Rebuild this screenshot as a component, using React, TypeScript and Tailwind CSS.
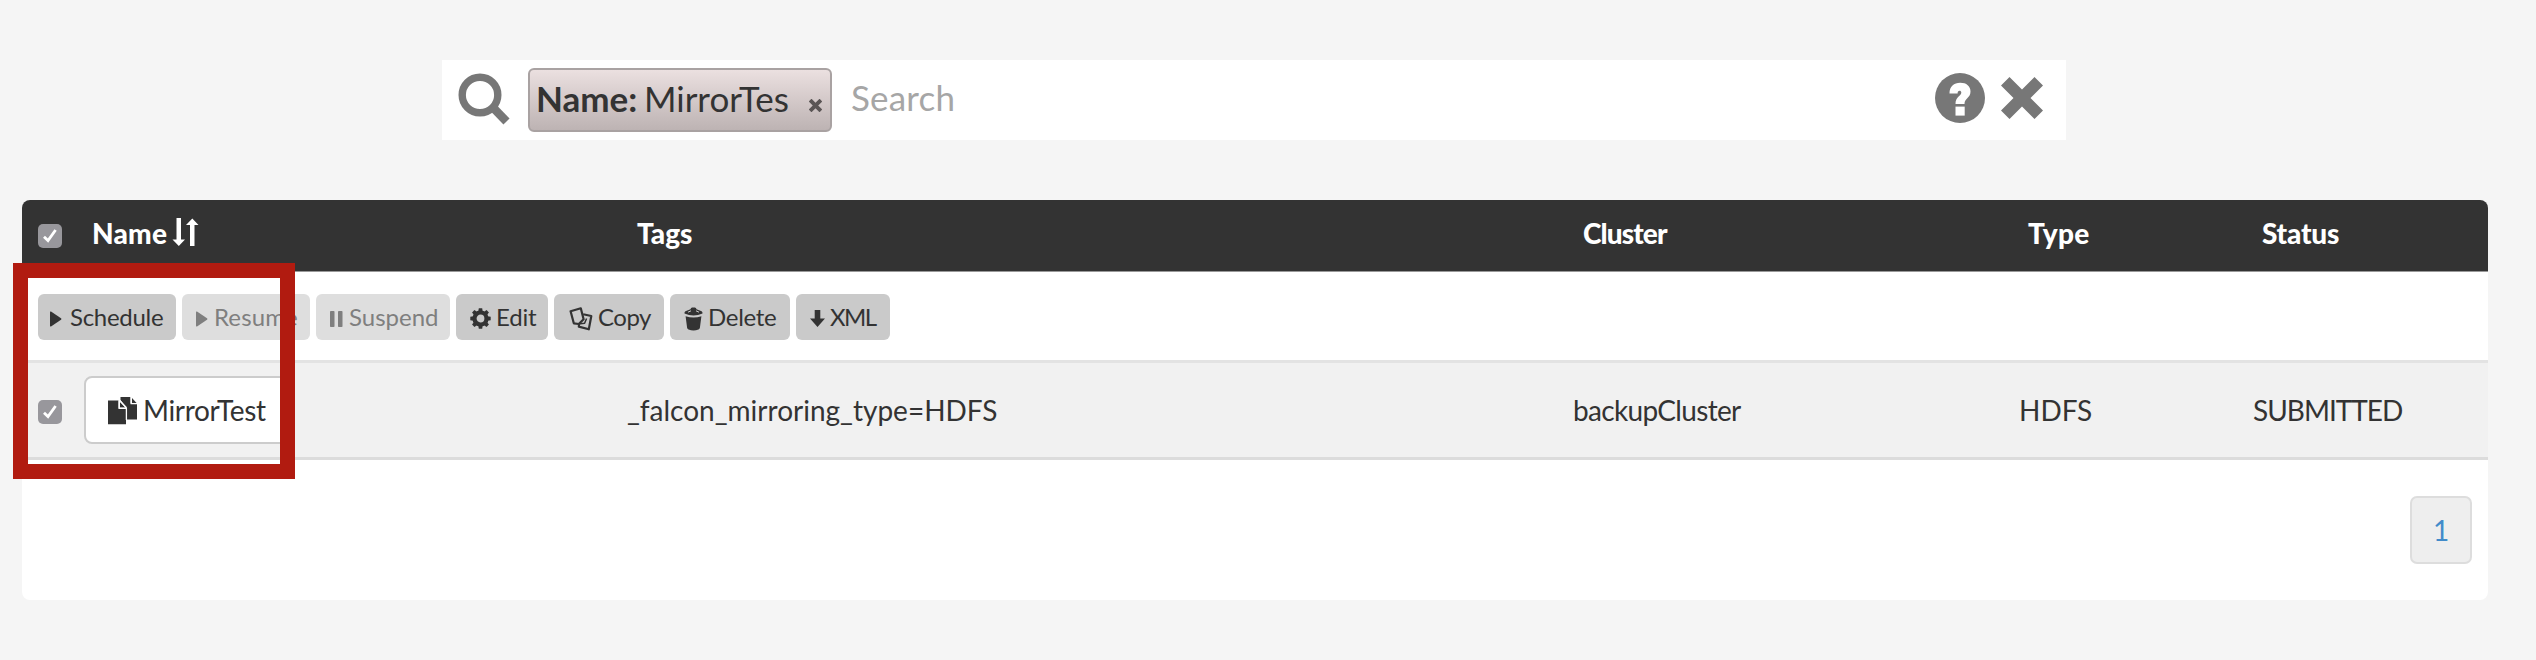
import React from "react";

function SearchIcon() {
  return (
    <svg className="h-[54px] w-[53px] shrink-0" viewBox="0 0 53 54" fill="none" stroke="#777">
      <circle cx="22" cy="22" r="17.8" strokeWidth="7.4" />
      <path d="M34 33.500 48.500 48.500" strokeWidth="8.500" />
    </svg>
  );
}

function HelpIcon() {
  return (
    <svg className="h-[50px] w-[50px] shrink-0" viewBox="0 0 50 50">
      <circle cx="25" cy="25" r="25" fill="#777" />
      <path
        d="M14.500 20.500C14.500 13.500 19 9.800 25.200 9.800C31.500 9.800 35.500 13.200 35.500 18.600C35.500 25.200 29.500 25.400 29.500 31H20.500C20.500 23.500 26.300 23 26.300 19.600C26.300 18.200 25.400 17.800 24.600 17.800C23.200 17.800 22.600 18.800 22.600 20.500Z"
        fill="#fff"
      />
      <rect x="20.500" y="33.600" width="9.200" height="9" fill="#fff" />
    </svg>
  );
}

function CloseIcon() {
  return (
    <svg className="h-[44px] w-[44px] shrink-0" viewBox="0 0 44 44">
      <path
        d="M9.500 1 22 13.500 34.500 1 43 9.500 30.500 22 43 34.500 34.500 43 22 30.500 9.500 43 1 34.500 13.500 22 1 9.500Z"
        fill="#777"
      />
    </svg>
  );
}

function SortIcon() {
  return (
    <svg className="h-[29px] w-[27px]" viewBox="0 0 27 29" fill="#fff">
      <path d="M4.500 0h4.500v21.500h4L6.800 28 .5 21.500h4z" />
      <path d="M18 28h4.500V7h4L20.300 .5 14 7h4z" />
    </svg>
  );
}

function PlayIcon() {
  return (
    <svg className="h-[16px] w-[13px]" viewBox="0 0 13 16" fill="currentColor">
      <path d="M1 1.200Q1 0 2 .6L12 7.200Q13 8 12 8.800L2 15.400Q1 16 1 14.800Z" />
    </svg>
  );
}

function PauseIcon() {
  return (
    <svg className="h-[16px] w-[13px]" viewBox="0 0 13 16" fill="currentColor">
      <rect x="0" y="0" width="4.500" height="16" rx=".8" />
      <rect x="8" y="0" width="4.500" height="16" rx=".8" />
    </svg>
  );
}

const GEAR_ANGLES = [0, 45, 90, 135, 180, 225, 270, 315];

function GearIcon() {
  return (
    <svg className="h-[21px] w-[21px]" viewBox="0 0 21 21" fill="currentColor">
      <circle cx="10.500" cy="10.500" r="6" fill="none" stroke="currentColor" strokeWidth="4.200" />
      {GEAR_ANGLES.map((a) => (
        <path key={a} d="M8.300 3.500 8.800 .3h3.400l.5 3.200z" transform={`rotate(${a} 10.5 10.5)`} />
      ))}
    </svg>
  );
}

function CopyIcon() {
  return (
    <svg className="h-[24px] w-[24px]" viewBox="0 0 24 24" fill="none" stroke="currentColor" strokeWidth="2.200" strokeLinejoin="round">
      <path d="M1.600 4.200 11.800 1.300 14.600 12.200 9.800 17 4.800 16.300Z" />
      <path d="M14.200 7.200 22.300 9 19.800 22.300 9.800 19.600 10.200 17" />
      <path d="M17.600 11.500 15.600 16.200 11 16.800" strokeWidth="1.500" />
    </svg>
  );
}

function TrashIcon() {
  return (
    <svg className="h-[24px] w-[19px]" viewBox="0 0 19 24" fill="currentColor">
      <path d="M6.500 2.200Q6.800 .6 8.200 .6h2.600Q12.200 .6 12.500 2.200L17.600 4.300Q18.800 5 18.500 6.600Q14 8.600 9.500 8.600T.5 6.600Q.2 5 1.400 4.300Z" />
      <path d="M1.600 9.300Q9.500 11.800 17.400 9.300L15.900 20.800Q15.700 22 14.500 22.500Q9.500 24.300 4.500 22.500Q3.300 22 3.100 20.800Z" />
      <path d="M4 5.200 7 3.800M15 5.200 12 3.800" stroke="#cacaca" strokeWidth="1" />
    </svg>
  );
}

function DownIcon() {
  return (
    <svg className="h-[17px] w-[15px]" viewBox="0 0 15 17" fill="currentColor">
      <path d="M4.700 0h5.600v8.500H15L7.500 17 0 8.500h4.700z" />
    </svg>
  );
}

function MirrorIcon() {
  return (
    <svg className="h-[29px] w-[30px]" viewBox="0 0 30 29">
      <path d="M12.500 1H22.500V7.500H29V23.500H18.800V12.500L12.500 4Z" fill="#333" />
      <path d="M24 2 29 7.500H24Z" fill="#333" />
      <path d="M0 4.500H10.500V12.500H18V28.300H0Z" fill="#333" />
      <path d="M12 6 17.300 11.500H12Z" fill="#333" />
      <path d="M11.200 4.500V12.300H18.400V24M23.200 1V7.700H29M11.500 4.200 18.500 11.800" fill="none" stroke="#fff" strokeWidth="1.300" />
    </svg>
  );
}

function Checkbox() {
  return (
    <span className="flex h-6 w-6 items-center justify-center rounded-[5px] bg-[#98979c]">
      <svg className="h-4 w-4" viewBox="0 0 16 16" fill="none" stroke="#fff" strokeWidth="2.800">
        <path d="M2 8.800 6 12.600 13.600 2" />
      </svg>
    </span>
  );
}

const ACTIONS = [
  { label: "Schedule", icon: <PlayIcon />, box: "w-[138px] pl-[11px] text-[#333] bg-[#cacaca]", slot: "w-[21px]", track: "tracking-[-0.28px]" },
  { label: "Resume", icon: <PlayIcon />, box: "w-[128px] pl-[13px] text-[#7f7f7f] bg-[#dedede]", slot: "w-[19px]", track: "tracking-[0.11px]" },
  { label: "Suspend", icon: <PauseIcon />, box: "w-[134px] pl-[14px] text-[#7f7f7f] bg-[#dedede]", slot: "w-[19px]", track: "tracking-normal" },
  { label: "Edit", icon: <GearIcon />, box: "w-[92px] pl-[14px] text-[#333] bg-[#cacaca]", slot: "w-[26px]", track: "tracking-[-0.2px]" },
  { label: "Copy", icon: <CopyIcon />, box: "w-[110px] pl-[15px] text-[#333] bg-[#cacaca]", slot: "w-[29px]", track: "tracking-[-0.5px]" },
  { label: "Delete", icon: <TrashIcon />, box: "w-[120px] pl-[14px] text-[#333] bg-[#cacaca]", slot: "w-[24px]", track: "tracking-[-0.3px]" },
  { label: "XML", icon: <DownIcon />, box: "w-[94px] pl-[14px] text-[#333] bg-[#cacaca]", slot: "w-[20px]", track: "tracking-[-1.6px]" },
];

const COLUMNS = "grid grid-cols-[62px_543px_946px_446px_234px_1fr] items-center";

export default function App() {
  return (
    <div className="relative h-[660px] w-[2536px] overflow-hidden bg-[#f5f5f5] pt-[60px] font-['Lato',sans-serif] whitespace-nowrap text-[#333]">
      <div className="ml-[442px] flex h-20 w-[1624px] items-center bg-white pr-[22px] pl-4">
        <SearchIcon />
        <div className="ml-[17px] flex h-16 w-[304px] items-center rounded-[6px] border-2 border-[#a9a2a2] bg-linear-to-b from-[#ebe0e0] to-[#bdb3b3] pb-[3px] pl-[6px] text-[35px] leading-none">
          <span className="w-[108px] font-bold">Name:</span>
          <span className="w-[165px]">MirrorTes</span>
          <svg className="mt-[14px] h-[13px] w-[13px]" viewBox="0 0 12 12" stroke="#5a5555" strokeWidth="3.600">
            <path d="M1 1 11 11M11 1 1 11" />
          </svg>
        </div>
        <span className="ml-[19px] pb-[6px] text-[35px] leading-none tracking-[0.2px] text-[#a6a6a6]">Search</span>
        <div className="mb-1 ml-auto flex items-center gap-[15px]">
          <HelpIcon />
          <CloseIcon />
        </div>
      </div>

      <div className="mt-[60px] ml-[22px] h-[400px] w-[2466px] overflow-hidden rounded-[8px] bg-white">
        <div className={`${COLUMNS} h-[72px] border-b border-[#999] bg-[#333] text-[28px] leading-none font-black text-white`}>
          <div className="pl-4">
            <Checkbox />
          </div>
          <div className="flex items-center gap-[5px] pb-[5px] pl-2">
            <span className="tracking-[0.2px]">Name</span>
            <span className="pb-px"><SortIcon /></span>
          </div>
          <div className="pb-[5px] pl-[10px]">Tags</div>
          <div className="pb-[5px] pl-[10px] tracking-[-0.88px]">Cluster</div>
          <div className="pb-[5px] pl-[9px] tracking-[0.3px]">Type</div>
          <div className="pb-[5px] pl-[9px] tracking-[-0.2px]">Status</div>
        </div>

        <div className="flex h-[88px] gap-[6px] pt-[22px] pl-4">
          {ACTIONS.map((a) => (
            <button key={a.label} className={`flex h-[46px] items-center rounded-[6px] text-[24px] leading-none ${a.box}`}>
              <span className={`flex shrink-0 pt-[3px] ${a.slot}`}>{a.icon}</span>
              <span className={a.track}>{a.label}</span>
            </button>
          ))}
        </div>

        <div className={`${COLUMNS} h-[100px] border-y-[3px] border-t-[#e3e3e3] border-b-[#dcdcdc] bg-[#f1f1f1] text-[28px] leading-none`}>
          <div className="pt-1 pl-4">
            <Checkbox />
          </div>
          <div className="flex h-[68px] w-[204px] items-center rounded-[8px] border-2 border-[#ccc] bg-white pl-[22px]">
            <MirrorIcon />
            <span className="pl-[5px] tracking-[-0.33px]">MirrorTest</span>
          </div>
          <div>_falcon_mirroring_type=HDFS</div>
          <div className="tracking-[-0.68px]">backupCluster</div>
          <div className="tracking-normal">HDFS</div>
          <div className="tracking-[-1px]">SUBMITTED</div>
        </div>

        <div className="flex justify-end pt-9 pr-4">
          <div className="flex h-[68px] w-[62px] items-center justify-center rounded-[7px] border-2 border-[#ddd] bg-[#eee] text-[28px] leading-none text-[#428bca]">
            1
          </div>
        </div>
      </div>

      <div className="absolute top-[263px] left-[13px] h-[216px] w-[282px] border-[15px] border-[#b11b10]" />
    </div>
  );
}
